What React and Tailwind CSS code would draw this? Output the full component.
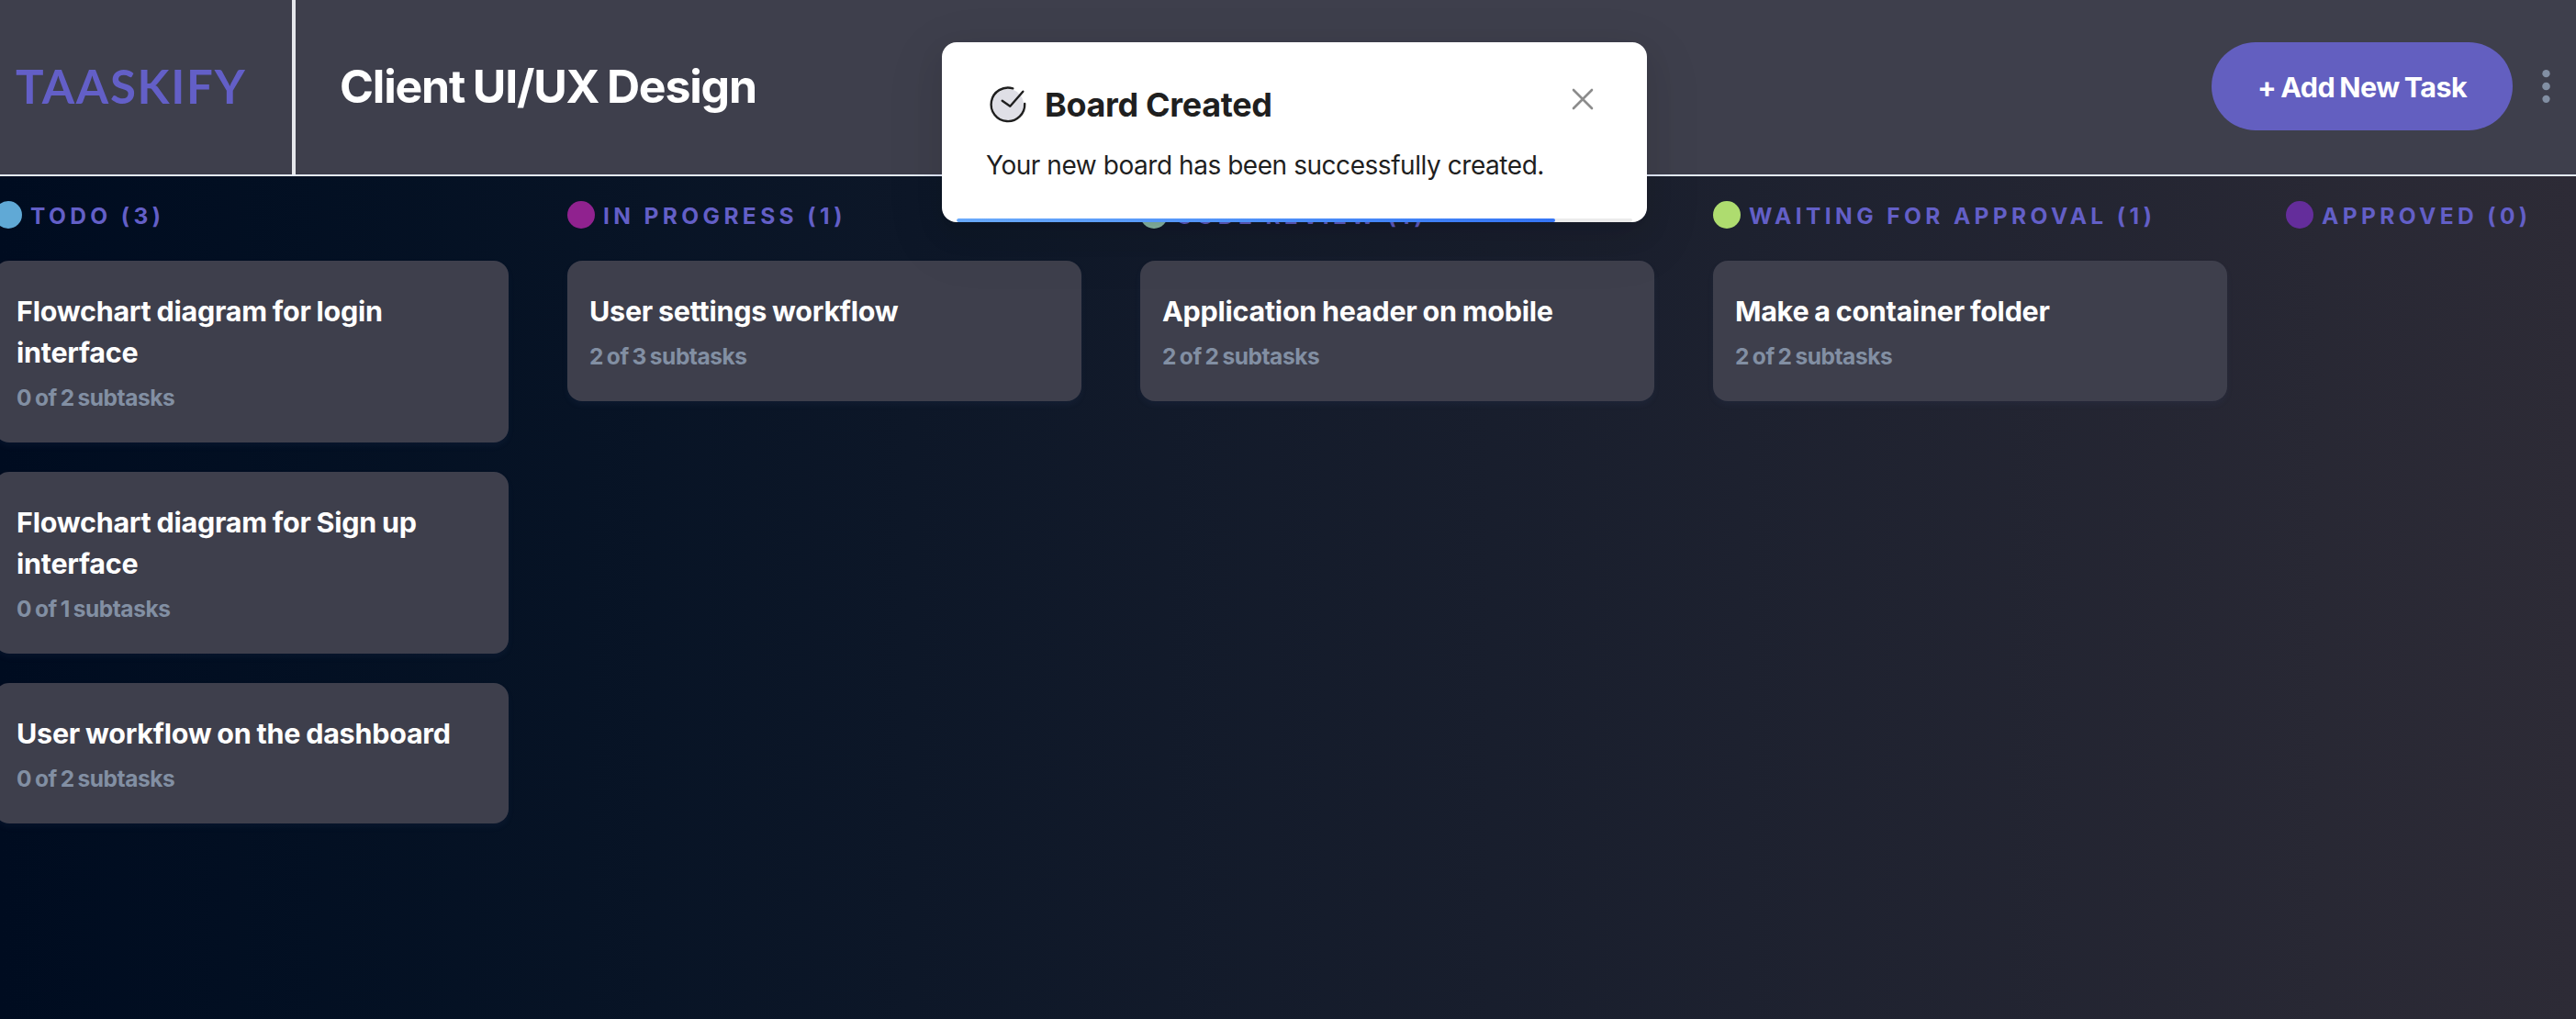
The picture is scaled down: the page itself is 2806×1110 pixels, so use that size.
const columns = [
  {
    name: "TODO",
    dot: "bg-[#60a9d6]",
    tasks: [
      { title: ["Flowchart diagram for login", "interface"], done: 0, total: 2 },
      { title: ["Flowchart diagram for Sign up", "interface"], done: 0, total: 1 },
      { title: ["User workflow on the dashboard"], done: 0, total: 2 },
    ],
  },
  { name: "IN PROGRESS", dot: "bg-[#90228f]", tasks: [{ title: ["User settings workflow"], done: 2, total: 3 }] },
  { name: "CODE REVIEW", dot: "bg-[#8bbaa8]", tasks: [{ title: ["Application header on mobile"], done: 2, total: 2 }] },
  { name: "WAITING FOR APPROVAL", dot: "bg-[#aedc6f]", tasks: [{ title: ["Make a container folder"], done: 2, total: 2 }] },
  { name: "APPROVED", dot: "bg-[#642d9b]", tasks: [] },
];

function TaskCard({ task }) {
  return (
    <article className="rounded-2xl bg-[#3e3f4c] px-6 pb-[31px] pt-8 shadow-[0_4px_6px_rgba(54,78,126,0.1)]">
      <h3 className="text-[30.5px] font-bold leading-[45px] tracking-[-0.25px] text-white [word-spacing:-1px]">
        {task.title.map((line) => (
          <span key={line} className="block whitespace-nowrap">{line}</span>
        ))}
      </h3>
      <p className="mt-[9px] text-[24.5px] font-bold leading-9 tracking-[-0.45px] text-[#828fa3] [word-spacing:-1.5px]">
        {task.done} of {task.total} subtasks
      </p>
    </article>
  );
}

function Column({ column }) {
  return (
    <section className="w-[560px] shrink-0">
      <div className="flex h-9 items-center gap-[9px]">
        <span className={`size-[30px] shrink-0 rounded-full ${column.dot}`} />
        <h2 className="whitespace-nowrap pt-[2px] text-[24.5px] font-bold tracking-[4.4px] text-[#635fc7]">
          {column.name} ({column.tasks.length})
        </h2>
      </div>
      <div className="mt-8 flex flex-col gap-8">
        {column.tasks.map((task, i) => (
          <TaskCard key={i} task={task} />
        ))}
      </div>
    </section>
  );
}

function Toast() {
  return (
    <div
      role="alert"
      className="absolute left-[1026px] top-[46px] h-[196px] w-[768px] overflow-hidden rounded-2xl bg-white text-[#1f1f1f] shadow-[0_12px_32px_rgba(0,0,0,0.08),0_6px_12px_-8px_rgba(0,0,0,0.12),0_18px_56px_16px_rgba(0,0,0,0.05)]"
    >
      <div className="flex items-start justify-between pl-[48px] pr-[56px] pt-[44px]">
        <div className="flex items-center">
          <svg viewBox="0 0 48 48" className="size-12" fill="none">
            <circle cx="24" cy="24" r="17" fill="#dfdfe6" />
            <path
              d="M29.3 6.3A18.3 18.3 0 1 0 42.2 23"
              stroke="#1f1f1f"
              strokeWidth="2.4"
              strokeLinecap="round"
            />
            <path d="M17.7 19.7l8.6 6 14-16" stroke="#1f1f1f" strokeWidth="2.4" strokeLinecap="round" strokeLinejoin="round" />
          </svg>
          <h4 className="ml-4 text-[36px] font-bold leading-[48px] tracking-[-0.35px]">Board Created</h4>
        </div>
        <svg viewBox="0 0 28 28" className="mt-[4px] size-7" stroke="#8c8c8c" strokeWidth="2.6" strokeLinecap="round">
          <path d="M4 4l20 20M24 4L4 24" />
        </svg>
      </div>
      <p className="ml-[48px] mt-[20px] whitespace-nowrap text-[28px] leading-[44px] tracking-[-0.45px]">
        Your new board has been successfully created.
      </p>
      <div className="absolute inset-x-4 bottom-0 h-1 overflow-hidden rounded-sm bg-[#ebebeb]">
        <div className="h-full w-[652px] rounded-sm bg-linear-to-r from-[#69a9fb] to-[#3575f5]" />
      </div>
    </div>
  );
}

export default function App() {
  return (
    <div className="relative flex h-[1110px] w-[2806px] flex-col overflow-hidden bg-linear-to-r from-[#000c20] to-[#2d2b36] font-['Inter',sans-serif]">
      <header className="flex h-[192px] shrink-0 border-b-2 border-[#e4ebfa] bg-[#3e3f4c]">
        <div className="flex w-[322px] items-center border-r-4 border-[#e5e7eb] pb-[4px] pl-[17px]">
          <span className="font-['Lato',sans-serif] text-[51px] font-bold leading-none tracking-[1.7px] text-[#635fc7]">TAASKIFY</span>
        </div>
        <div className="flex flex-1 items-center justify-between pb-[2px] pl-[48px] pr-[28px]">
          <h1 className="text-[50px] font-bold leading-none tracking-[-1.2px] text-white [word-spacing:-2px]">Client UI/UX Design</h1>
          <div className="flex items-center">
            <button className="h-24 w-[328px] rounded-[48px] bg-[#635fc0] pt-px text-[30.5px] font-bold tracking-[-0.55px] text-white [word-spacing:-1.5px]">
              + Add New Task
            </button>
            <svg viewBox="0 0 10 40" className="ml-8 h-10 w-[9px]" fill="#828fa3">
              <circle cx="5" cy="4.6" r="4.6" />
              <circle cx="5" cy="20" r="4.8" />
              <circle cx="5" cy="35.4" r="4.6" />
            </svg>
          </div>
        </div>
      </header>
      <main className="-ml-[6px] flex gap-16 pt-6">
        {columns.map((column) => (
          <Column key={column.name} column={column} />
        ))}
      </main>
      <Toast />
    </div>
  );
}
